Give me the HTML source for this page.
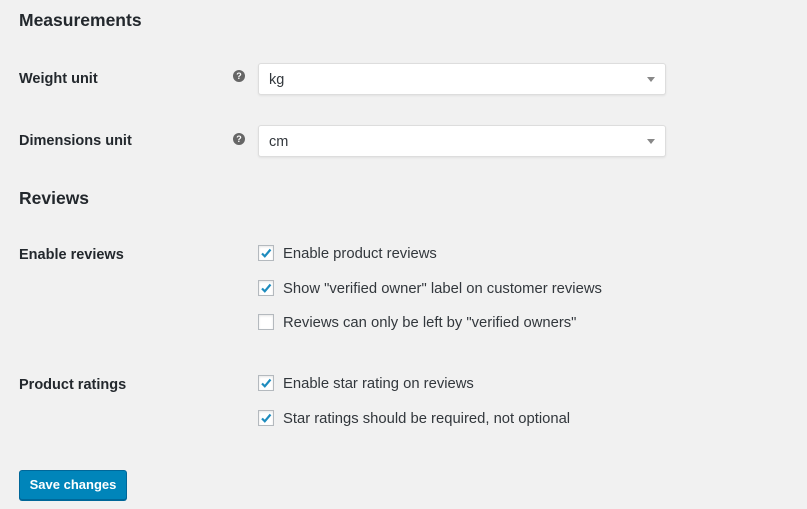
<!DOCTYPE html>
<html><head><style>
body{margin:0;width:807px;height:509px;background:#f1f1f1;font-family:"Liberation Sans",sans-serif;color:#23282d;position:relative;overflow:hidden}
h2{position:absolute;margin:0;font-size:17.5px;font-weight:600;left:19px}
.lbl{position:absolute;left:19px;font-size:14.5px;font-weight:600}
.help{position:absolute;left:233px;width:12px;height:12px;border-radius:50%;background:#666;color:#fff;font-size:9px;font-weight:bold;text-align:center;line-height:12px}
.sel{position:absolute;left:258px;width:406px;height:30px;background:#fff;border:1px solid #ddd;border-radius:3px;box-shadow:0 1px 2px rgba(0,0,0,.07)}
.sel span{position:absolute;left:10px;top:8px;font-size:14.5px;color:#32373c}
.sel i{position:absolute;right:10px;top:13px;border-left:4px solid transparent;border-right:4px solid transparent;border-top:5px solid #888}
.cb{position:absolute;left:258px;width:14px;height:14px;border:1px solid #b4b9be;background:#fff;box-shadow:inset 0 1px 2px rgba(0,0,0,.1)}
.cb svg{position:absolute;left:0;top:0}
.ct{position:absolute;left:283px;font-size:14.8px;color:#32373c}
.btn{position:absolute;left:19px;top:470px;width:106px;height:28px;background:#0085ba;border:1px solid #006799;border-radius:3px;color:#fff;font-size:13px;font-weight:600;text-align:center;line-height:28px;box-shadow:0 1px 0 #006799}
</style></head><body>
<h2 style="top:10px">Measurements</h2>
<div class="lbl" style="top:71px">Weight unit</div>
<div class="help" style="top:70px">?</div>
<div class="sel" style="top:63px"><span>kg</span><i></i></div>
<div class="lbl" style="top:133px">Dimensions unit</div>
<div class="help" style="top:133px">?</div>
<div class="sel" style="top:125px"><span>cm</span><i></i></div>
<h2 style="top:188px">Reviews</h2>
<div class="lbl" style="top:247px">Enable reviews</div>
<div class="cb" style="top:245px"><svg width="14" height="14" viewBox="0 0 14 14"><path d="M3 7.5l2.8 2.8L11.5 3.5" fill="none" stroke="#1e8cbe" stroke-width="2.2"/></svg></div>
<div class="ct" style="top:246px">Enable product reviews</div>
<div class="cb" style="top:280px"><svg width="14" height="14" viewBox="0 0 14 14"><path d="M3 7.5l2.8 2.8L11.5 3.5" fill="none" stroke="#1e8cbe" stroke-width="2.2"/></svg></div>
<div class="ct" style="top:281px">Show "verified owner" label on customer reviews</div>
<div class="cb" style="top:314px"></div>
<div class="ct" style="top:315px">Reviews can only be left by "verified owners"</div>
<div class="lbl" style="top:377px">Product ratings</div>
<div class="cb" style="top:375px"><svg width="14" height="14" viewBox="0 0 14 14"><path d="M3 7.5l2.8 2.8L11.5 3.5" fill="none" stroke="#1e8cbe" stroke-width="2.2"/></svg></div>
<div class="ct" style="top:376px">Enable star rating on reviews</div>
<div class="cb" style="top:410px"><svg width="14" height="14" viewBox="0 0 14 14"><path d="M3 7.5l2.8 2.8L11.5 3.5" fill="none" stroke="#1e8cbe" stroke-width="2.2"/></svg></div>
<div class="ct" style="top:411px">Star ratings should be required, not optional</div>
<div class="btn">Save changes</div>
</body></html>
